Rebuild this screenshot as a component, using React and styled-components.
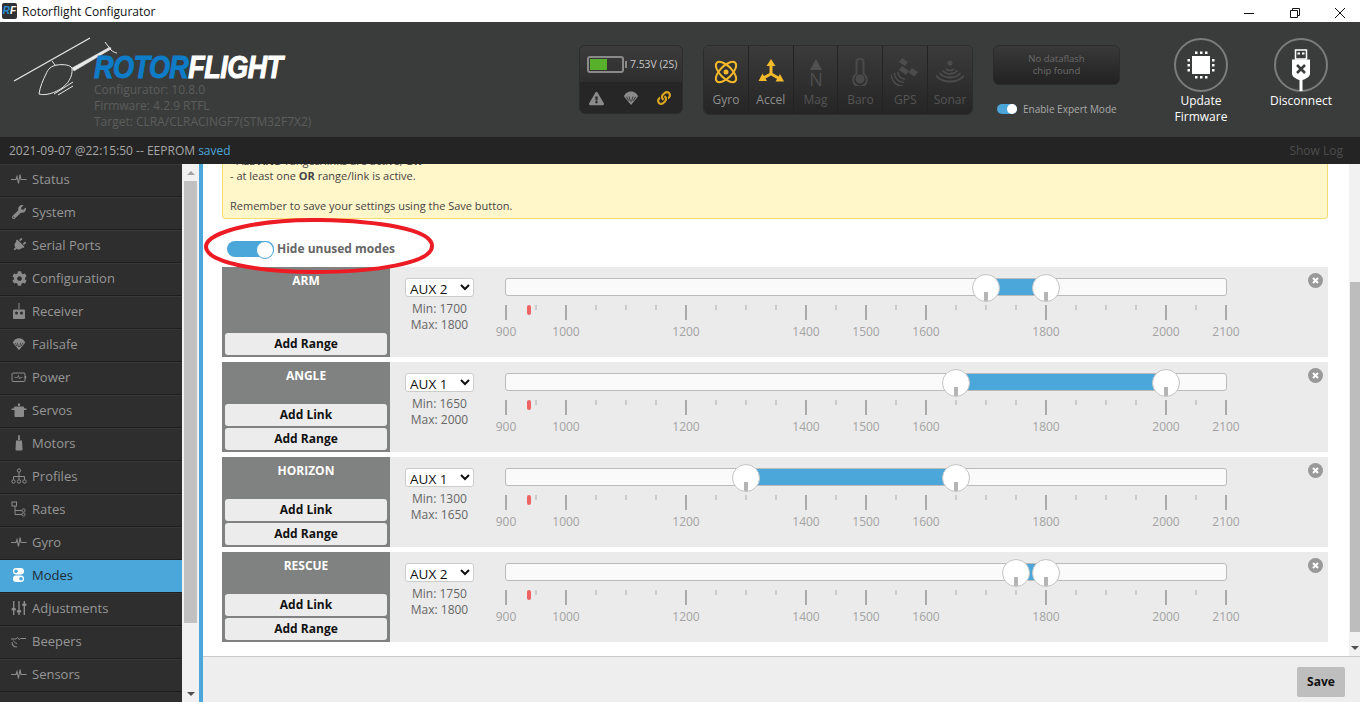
import React from "react";
import styled, { createGlobalStyle } from "styled-components";
import { FaWrench, FaPlug, FaCog, FaExclamationTriangle, FaLink } from "react-icons/fa";

const GlobalStyle = createGlobalStyle`
    html, body { margin: 0; padding: 0; height: 100%; overflow: hidden; background: #fff; }
    body { font-family: "Open Sans", "Liberation Sans", sans-serif; }
    * { box-sizing: border-box; }
`;

const Page = styled.div`
    width: 1360px;
    height: 702px;
    display: flex;
    flex-direction: column;
    position: relative;
    overflow: hidden;
`;

/* window title bar */
const TitleBar = styled.div`
    height: 22px;
    flex: none;
    display: flex;
    align-items: center;
    background: #fff;
    padding-left: 2px;
`;
const AppIcon = styled.div`
    width: 15px;
    height: 16px;
    margin-right: 5px;
    background: #2f3133;
    border-radius: 2px;
    font: italic 700 10px/16px "Liberation Sans", sans-serif;
    text-align: center;
    color: #fff;
    span { color: #2b8fd6; }
`;
const AppTitle = styled.div`
    font-size: 12px;
    color: #111;
    flex: 1;
`;
const WinButton = styled.div`
    width: 45.5px;
    padding-top: 4px;
    display: flex;
    justify-content: center;
    align-items: center;
    svg { display: block; }
    &:last-child { margin-right: -3px; }
`;

/* header */
const Header = styled.div`
    height: 115px;
    flex: none;
    background: #3a3c3b;
    display: flex;
    align-items: flex-start;
`;
const Brand = styled.div`
    width: 579px;
    flex: none;
    height: 100%;
    position: relative;
    padding: 31px 0 0 94px;
`;
const HeliArt = styled.svg`
    position: absolute;
    left: 0;
    top: 0;
`;
const Wordmark = styled.div`
    font: italic 700 31px/30px "Liberation Sans", sans-serif;
    height: 29px;
    letter-spacing: -0.6px;
    -webkit-text-stroke: 1px currentColor;
    color: #fff;
    white-space: nowrap;
    transform: scaleX(0.87);
    transform-origin: left center;
    span { color: #0e7cc8; }
`;
const BuildInfo = styled.div`
    font-size: 12px;
    line-height: 16px;
    color: #5c5d5c;
`;
const Panel = styled.div`
    margin-top: 23px;
    border: 1px solid #2c2c2c;
    border-radius: 6px;
    overflow: hidden;
    flex: none;
`;
const BatteryPanel = styled(Panel)`
    width: 104px;
    height: 69px;
    margin-right: 20px;
    background: #262626;
`;
const BatteryRow = styled.div`
    height: 36px;
    background: linear-gradient(#3c3c3c, #2e2e2e);
    display: flex;
    align-items: center;
    padding-left: 7px;
    gap: 5px;
    font-size: 10.4px;
    color: #c8c8c8;
    white-space: nowrap;
`;
const BatteryShell = styled.div`
    width: 37px;
    height: 17px;
    border: 2px solid #8a8a8a;
    border-radius: 3px;
    padding: 1px;
    position: relative;
    &::after {
        content: "";
        position: absolute;
        right: -5px;
        top: 3px;
        width: 2px;
        height: 7px;
        background: #8a8a8a;
    }
`;
const BatteryFill = styled.div`
    width: 55%;
    height: 100%;
    background: #59b02d;
`;
const VoltageText = styled.span`
    margin-left: 1px;
`;
const StatusIcons = styled.div`
    height: 32px;
    display: flex;
    align-items: center;
    justify-content: space-between;
    padding: 0 11px 0 9px;
    color: #8a8a8a;
`;
const SensorPanel = styled(Panel)`
    width: 270px;
    height: 70px;
    display: flex;
    margin-right: 20px;
`;
const Sensor = styled.div`
    flex: 1;
    height: 100%;
    background: linear-gradient(#3b3b3b, #252525);
    border-right: 1px solid #232323;
    display: flex;
    flex-direction: column;
    align-items: center;
    font-size: 12px;
    padding-top: 12px;
    color: ${p => (p.$on ? "#8f8f8f" : "#555")};
    &:last-child { border-right: 0; }
    svg { display: block; }
    span { margin-top: 6px; line-height: 16px; }
`;
const ExpertColumn = styled.div`
    width: 127px;
    flex: none;
    margin-top: 23px;
`;
const FlashBox = styled.div`
    height: 40px;
    border: 1px solid #2c2c2c;
    border-radius: 6px;
    background: linear-gradient(#393939, #222);
    color: #6b6b6b;
    font-size: 9.5px;
    line-height: 12px;
    display: flex;
    align-items: center;
    justify-content: center;
    text-align: center;
`;
const ExpertRow = styled.div`
    display: flex;
    align-items: center;
    margin: 17px 0 0 4px;
    gap: 6px;
    font-size: 10px;
    color: #a9a9a9;
    white-space: nowrap;
`;
const MiniToggle = styled.div`
    width: 20px;
    height: 10px;
    border-radius: 5px;
    background: #4ba7da;
    display: flex;
    justify-content: flex-end;
    align-items: center;
    &::after {
        content: "";
        width: 10px;
        height: 10px;
        border-radius: 50%;
        background: #fff;
    }
`;
const RoundAction = styled.div`
    width: ${p => p.$w}px;
    flex: none;
    margin-top: 16px;
    display: flex;
    flex-direction: column;
    align-items: center;
    color: #fff;
    font-size: 12px;
    line-height: 16px;
    text-align: center;
    svg { display: block; margin-bottom: 1px; }
`;

/* log bar */
const LogBar = styled.div`
    height: 27px;
    flex: none;
    background: #242424;
    display: flex;
    align-items: center;
    justify-content: space-between;
    padding: 0 17px 0 9px;
    font-size: 12px;
    color: #a6a6a6;
    b { font-weight: 400; color: #4ba7da; }
    i { font-style: normal; color: #4d4d4d; }
`;

/* body */
const Body = styled.div`
    flex: 1;
    min-height: 0;
    display: flex;
`;
const Sidebar = styled.div`
    width: 182px;
    flex: none;
    background: #2e2e2e;
    overflow: hidden;
`;
const NavItem = styled.div`
    height: 33px;
    display: flex;
    align-items: center;
    padding: 0 0 3px 11px;
    gap: 5px;
    font-size: 13px;
    color: ${p => (p.$active ? "#1c2a33" : "#979797")};
    background: ${p => (p.$active ? "#4ba7da" : "transparent")};
    border-bottom: 1px solid #1e1e1e;
    border-top: 1px solid ${p => (p.$active ? "#4ba7da" : "#383838")};
    svg { flex: none; display: block; }
`;
const NavIcon = styled.div`
    width: 16px;
    height: 16px;
    flex: none;
    display: flex;
    align-items: center;
    justify-content: center;
    color: ${p => (p.$active ? "#fff" : "#8b8b8b")};
`;
const TiltedPlug = styled(FaPlug)`
    transform: rotate(45deg);
`;
const ScrollTrack = styled.div`
    width: ${p => p.$w}px;
    flex: none;
    background: #f1f1f1;
    display: flex;
    flex-direction: column;
    align-items: ${p => (p.$end ? "flex-end" : "center")};
`;
const ScrollArrow = styled.div`
    height: 17px;
    flex: none;
    display: flex;
    align-items: center;
    justify-content: center;
    align-self: stretch;
    &::after {
        content: "";
        border-left: 4px solid transparent;
        border-right: 4px solid transparent;
        ${p => (p.$down ? "border-top: 4px solid #505050;" : "border-bottom: 4px solid #a3a3a3;")}
    }
`;
const ScrollThumb = styled.div`
    width: ${p => p.$w}px;
    height: ${p => p.$h}px;
    margin-top: ${p => p.$top}px;
    background: ${p => p.$c};
    flex: none;
`;
const Spacer = styled.div`
    flex: 1;
`;
const Stage = styled.div`
    flex: 1;
    min-width: 0;
    display: flex;
    flex-direction: column;
    border-left: 4px solid #4ba7da;
`;
const ScrollArea = styled.div`
    flex: 1;
    min-height: 0;
    display: flex;
    background: #fff;
`;
const Content = styled.div`
    flex: 1;
    min-width: 0;
    overflow: hidden;
    padding: 0 21px 0 19px;
`;
const Notice = styled.div`
    margin-top: -12px;
    background: #fff6c9;
    border: 1px solid #f2dd72;
    border-radius: 0 0 3px 3px;
    padding: 0 7px 5px;
    font-size: 11px;
    line-height: 15px;
    color: #444;
    b { font-weight: 700; }
`;
const HideRow = styled.div`
    height: 48px;
    padding: 12px 0 0 5px;
    display: flex;
    align-items: center;
    gap: 3px;
    font-size: 12px;
    font-weight: 700;
    color: #666;
    span { margin-top: -2px; }
`;
const BigToggle = styled.div`
    width: 47px;
    height: 16px;
    border-radius: 8px;
    background: #4ba7da;
    display: flex;
    justify-content: flex-end;
    &::after {
        content: "";
        width: 16px;
        height: 16px;
        border-radius: 50%;
        background: #fff;
        border: 1px solid #4ba7da;
    }
`;
const ModeList = styled.div`
    display: flex;
    flex-direction: column;
    gap: 5px;
`;
const ModeRow = styled.div`
    height: 90px;
    background: #ebebeb;
    display: flex;
    position: relative;
`;
const ModeHead = styled.div`
    width: 168px;
    flex: none;
    background: #7f8280;
    display: flex;
    flex-direction: column;
    padding: 0 3px 2px;
    gap: 2px;
`;
const ModeName = styled.div`
    flex: 1;
    text-align: center;
    color: #fff;
    font-size: 12px;
    font-weight: 700;
    line-height: 16px;
    padding-top: 6px;
`;
const HeadButton = styled.div`
    height: 22px;
    background: #ececec;
    border-radius: 3px;
    color: #111;
    font-size: 12px;
    font-weight: 700;
    line-height: 22px;
    text-align: center;
`;
const RangeColumn = styled.div`
    width: 115px;
    flex: none;
    padding: 11px 0 0 15px;
`;
const AuxSelect = styled.select`
    width: 69px;
    height: 19px;
    border: 1px solid #ccc;
    border-radius: 3px;
    background: #fff;
    font-family: "Open Sans", sans-serif;
    font-size: 13.5px;
    color: #111;
    padding: 0;
    display: block;
`;
const MinMax = styled.div`
    width: 69px;
    margin-top: 4px;
    text-align: center;
    font-size: 12px;
    line-height: 16px;
    color: #666;
`;
const SliderColumn = styled.div`
    width: 722px;
    flex: none;
    padding-top: 11px;
`;
const Track = styled.div`
    height: 18px;
    border: 1px solid #bbb;
    border-radius: 3px;
    background: #fafafa;
    position: relative;
`;
const TrackFill = styled.div`
    position: absolute;
    top: 0;
    bottom: 0;
    background: #4ba7da;
`;
const Handle = styled.div`
    position: absolute;
    top: -5px;
    width: 28px;
    height: 28px;
    margin-left: -14px;
    border: 1px solid #c4c4c4;
    border-radius: 50%;
    background: #fff;
    overflow: hidden;
    &::after {
        content: "";
        position: absolute;
        left: 11px;
        bottom: 0;
        width: 4px;
        height: 9px;
        background: #b5b5b5;
    }
`;
const Pips = styled.div`
    margin: 9px 1px 0;
    display: flex;
    justify-content: space-between;
    position: relative;
`;
const Pip = styled.div`
    width: 0;
    display: flex;
    flex-direction: column;
    align-items: center;
    &::before {
        content: "";
        flex: none;
        width: 2px;
        height: ${p => (p.$major ? 15 : 5)}px;
        background: ${p => (p.$major ? "#aaa" : "#ccc")};
    }
    span {
        margin-top: ${p => (p.$major ? 4 : 14)}px;
        font-size: 12px;
        line-height: 16px;
        color: #a3a3a3;
    }
`;
const ChannelMark = styled.div`
    position: absolute;
    top: 0;
    width: 4px;
    height: 10px;
    margin-left: -2px;
    border-radius: 2px;
    background: #ee6464;
`;
const RemoveButton = styled.div`
    position: absolute;
    top: 6px;
    right: 5px;
    width: 15px;
    height: 15px;
    svg { display: block; }
`;
const RingMark = styled.svg`
    position: absolute;
    left: 202px;
    top: 215px;
    pointer-events: none;
`;
const Footer = styled.div`
    height: 46px;
    flex: none;
    background: #eee;
    border-top: 1px solid #c9c9c9;
    display: flex;
    justify-content: flex-end;
    align-items: flex-start;
    padding: 10px 15px 0 0;
`;
const SaveButton = styled.div`
    width: 48px;
    height: 30px;
    background: #bebebe;
    border-radius: 2px;
    color: #111;
    font-size: 12px;
    font-weight: 700;
    line-height: 30px;
    text-align: center;
`;

/* drawings */
const Pulse = () => (
    <svg width="16" height="16" viewBox="0 0 16 16" fill="none" stroke="currentColor" strokeWidth="1.1">
        <path d="M0 8.5h5l1-3 1.5 7 1.5-9 1 5h5.5" />
    </svg>
);
const Parachute = ({ size = 16, hole = "#2e2e2e" }) => (
    <svg width={size} height={size} viewBox="0 0 16 16" fill="currentColor">
        <path d="M1 6.5C2 3 5 1.5 8 1.5s6 1.5 7 5L8 15z" />
        <path d="M3.4 6.7l2.3 4M12.6 6.7l-2.3 4M6 6.5l1.5 5M10 6.5l-1.5 5" stroke={hole} strokeWidth=".8" />
    </svg>
);
const Receiver = () => (
    <svg width="16" height="16" viewBox="0 0 16 16" fill="currentColor">
        <path d="M7.5 0h1v6h-1z" />
        <path d="M3 6.5h10a1 1 0 0 1 1 1V15a1 1 0 0 1-1 1H3a1 1 0 0 1-1-1V7.500a1 1 0 0 1 1-1z" />
        <circle cx="5.500" cy="10" r="1.500" fill="#2e2e2e" />
        <circle cx="10.500" cy="10" r="1.500" fill="#2e2e2e" />
    </svg>
);
const PowerIcon = () => (
    <svg width="16" height="16" viewBox="0 0 16 16" fill="none" stroke="currentColor">
        <rect x="1" y="4" width="13" height="8.500" rx="1" />
        <path d="M14.500 7v2.500" strokeWidth="1.500" />
        <path d="M3.500 8.500h3l1-2 1 3.500 1-1.500h2" strokeWidth=".8" />
    </svg>
);
const Pot = () => (
    <svg width="16" height="16" viewBox="0 0 16 16" fill="currentColor">
        <path d="M7 1.500h2V4H7z" />
        <path d="M3.500 4.500h9l1 2h2V8h-2.500v6a1 1 0 0 1-1 1H4.500a1 1 0 0 1-1-1V8H.500V6.500h2z" />
    </svg>
);
const Motor = () => (
    <svg width="16" height="16" viewBox="0 0 16 16" fill="currentColor">
        <path d="M7.300 0h1.400l.3 5h-2z" />
        <path d="M5 5.500h6l.500 9a1 1 0 0 1-1 1h-5a1 1 0 0 1-1-1z" />
    </svg>
);
const Sitemap = () => (
    <svg width="16" height="16" viewBox="0 0 16 16" fill="none" stroke="currentColor" strokeWidth="1">
        <circle cx="8" cy="2.500" r="1.700" />
        <circle cx="2.500" cy="13.500" r="1.700" />
        <circle cx="8" cy="13.500" r="1.700" />
        <circle cx="13.500" cy="13.500" r="1.700" />
        <path d="M8 4.200v7.600M2.500 11.800V8.500h11v3.300" />
    </svg>
);
const RatesIcon = () => (
    <svg width="16" height="16" viewBox="0 0 16 16" fill="none" stroke="currentColor" strokeWidth="1">
        <rect x="1" y="1" width="4.500" height="4" />
        <path d="M4 5v8.500h7M4 9.500h7" />
        <circle cx="12.500" cy="9.500" r="1.600" />
        <circle cx="12.500" cy="13.500" r="1.600" />
    </svg>
);
const ModesIcon = () => (
    <svg width="16" height="16" viewBox="0 0 16 16" fill="currentColor">
        <rect x="2" y="1" width="11" height="6.500" rx="3.200" />
        <rect x="2" y="8.500" width="11" height="6.500" rx="3.200" />
        <circle cx="5" cy="4.200" r="1.800" fill="#4ba7da" />
        <circle cx="10" cy="11.800" r="1.800" fill="#4ba7da" />
    </svg>
);
const AdjustIcon = () => (
    <svg width="16" height="16" viewBox="0 0 16 16" fill="currentColor">
        <path d="M2 1h1.400v14H2zM7.300 1h1.400v14H7.300zM12.600 1H14v14h-1.400z" />
        <rect x=".5" y="8" width="4.400" height="2.600" rx="1" />
        <rect x="5.800" y="10" width="4.400" height="2.600" rx="1" />
        <rect x="11.100" y="3.500" width="4.400" height="2.600" rx="1" />
    </svg>
);
const BeeperIcon = () => (
    <svg width="16" height="16" viewBox="0 0 16 16" fill="none" stroke="currentColor" strokeWidth="1">
        <path d="M0 6h5l1.500-1.500L8 6.500 9.500 5.500H15" />
        <path d="M1 9c0 3 2 5 5 5M1 11c.5 1.500 1.500 2.500 3 3M2.500 7.500C3 9 4 10 6 10.500" />
    </svg>
);

const Gyro = () => (
    <svg width="28" height="28" viewBox="0 0 28 28" fill="none" stroke="#f2b92b" strokeWidth="2">
        <ellipse cx="14" cy="14" rx="13" ry="6" transform="rotate(45 14 14)" />
        <ellipse cx="14" cy="14" rx="13" ry="6" transform="rotate(-45 14 14)" />
        <circle cx="14" cy="14" r="2.500" fill="#f2b92b" stroke="none" />
    </svg>
);
const Accel = () => (
    <svg width="28" height="28" viewBox="0 0 28 28" fill="#f2b92b">
        <path d="M14 1l4.500 7H15.500v7l6 3.500 1.500-2.500 4 7.500h-8.500l1.500-2.500L14 17.500 8.500 20.500 10 23H1.500l4-7.500L7 18l5.500-3V8H9.500z" />
    </svg>
);
const Mag = () => (
    <svg width="28" height="28" viewBox="0 0 28 28">
        <path d="M8 12L14 1l6 11z" fill="#4f4f4f" />
        <text x="14" y="28" textAnchor="middle" fontFamily="Open Sans, sans-serif" fontSize="18" fill="#4f4f4f">N</text>
    </svg>
);
const Baro = () => (
    <svg width="28" height="28" viewBox="0 0 28 28" fill="none" stroke="#4a4a4a" strokeWidth="2">
        <path d="M10.500 16V4a3.500 3.500 0 0 1 7 0v12a6.800 6.800 0 1 1-7 0z" />
        <circle cx="14" cy="21" r="3.500" fill="#4a4a4a" />
    </svg>
);
const Gps = () => (
    <svg width="28" height="28" viewBox="0 0 28 28" fill="#4c4c4c">
        <path d="M11 0l6 4-3 4-6-4zM21 10l6 4-3.500 4.500-6-4z" />
        <path d="M11 8l7 5-3 4-7-5z" />
        <path d="M7 14c0 4 3 7 7 7M3.500 15c0 5.500 4 9.500 9.500 9.500M0 16c.5 7 5 12 12 12" fill="none" stroke="#4c4c4c" strokeWidth="1.500" />
    </svg>
);
const Sonar = () => (
    <svg width="28" height="28" viewBox="0 0 28 28" fill="none" stroke="#4c4c4c" strokeWidth="1.800">
        <circle cx="14" cy="5" r="2.500" fill="#4c4c4c" stroke="none" />
        <path d="M10 11c2.500 2 5.500 2 8 0M6.500 12.500c4 4.500 11 4.500 15 0M3.500 15c5 6 16 6 21 0M0 17.500c6 8 22 8 28 0" />
    </svg>
);
const ChipCircle = () => (
    <svg width="54" height="54" viewBox="0 0 54 54">
        <circle cx="27" cy="27" r="26" fill="none" stroke="#7c7c7c" strokeWidth="2" />
        <rect x="18" y="18" width="18" height="18" fill="#fff" />
        <path d="M21 13.500h2.500v2.500H21zM26 13.500h2.500v2.500H26zM31 13.500h2.500v2.500H31zM21 38h2.500v2.500H21zM26 38h2.500v2.500H26zM31 38h2.500v2.500H31zM13.500 21H16v2.500h-2.500zM13.500 26H16v2.500h-2.500zM13.500 31H16v2.500h-2.500zM38 21h2.500v2.500H38zM38 26h2.500v2.500H38zM38 31h2.500v2.500H38z" fill="#fff" />
    </svg>
);
const UsbCircle = () => (
    <svg width="54" height="54" viewBox="0 0 54 54">
        <circle cx="27" cy="27" r="26" fill="none" stroke="#7c7c7c" strokeWidth="2" />
        <path d="M21.500 12h11v9h-11z" fill="none" stroke="#fff" strokeWidth="1.500" />
        <path d="M23.500 14.500h2.500v2h-2.500zM28 14.500h2.500v2H28z" fill="#fff" />
        <path d="M18 21.500h18v14c0 3-3 5-7.500 6.500v11h-3V42C21 40.500 18 38.500 18 35.500z" fill="#fff" />
        <path d="M23 27l8 8M31 27l-8 8" stroke="#3a3c3b" strokeWidth="2.500" />
    </svg>
);

const scaleLeft = v => ((v - 900) / 1200) * 100;
const MAJOR = [900, 1000, 1200, 1400, 1500, 1600, 1800, 2000, 2100];
const PIP_VALUES = Array.from({ length: 25 }, (_, i) => 900 + i * 50);

const NAV = [
    ["Status", <Pulse />],
    ["System", <FaWrench size={14} />],
    ["Serial Ports", <TiltedPlug size={14} />],
    ["Configuration", <FaCog size={15} />],
    ["Receiver", <Receiver />],
    ["Failsafe", <Parachute size={14} />],
    ["Power", <PowerIcon />],
    ["Servos", <Pot />],
    ["Motors", <Motor />],
    ["Profiles", <Sitemap />],
    ["Rates", <RatesIcon />],
    ["Gyro", <Pulse />],
    ["Modes", <ModesIcon />],
    ["Adjustments", <AdjustIcon />],
    ["Beepers", <BeeperIcon />],
    ["Sensors", <Pulse />],
];

const MODES = [
    { name: "ARM", aux: "AUX 2", min: 1700, max: 1800, link: false },
    { name: "ANGLE", aux: "AUX 1", min: 1650, max: 2000, link: true },
    { name: "HORIZON", aux: "AUX 1", min: 1300, max: 1650, link: true },
    { name: "RESCUE", aux: "AUX 2", min: 1750, max: 1800, link: true },
];

function ModeEntry({ mode }) {
    return (
        <ModeRow>
            <ModeHead>
                <ModeName>{mode.name}</ModeName>
                {mode.link && <HeadButton>Add Link</HeadButton>}
                <HeadButton>Add Range</HeadButton>
            </ModeHead>
            <RangeColumn>
                <AuxSelect defaultValue={mode.aux}>
                    <option>AUX 1</option>
                    <option>AUX 2</option>
                </AuxSelect>
                <MinMax>
                    Min: {mode.min}
                    <br />
                    Max: {mode.max}
                </MinMax>
            </RangeColumn>
            <SliderColumn>
                <Track>
                    <TrackFill style={{ left: `${scaleLeft(mode.min)}%`, right: `${100 - scaleLeft(mode.max)}%` }} />
                    <Handle style={{ left: `${scaleLeft(mode.min)}%` }} />
                    <Handle style={{ left: `${scaleLeft(mode.max)}%` }} />
                </Track>
                <Pips>
                    <ChannelMark style={{ left: `${scaleLeft(938)}%` }} />
                    {PIP_VALUES.map(v => (
                        <Pip key={v} $major={MAJOR.includes(v)}>
                            {MAJOR.includes(v) && <span>{v}</span>}
                        </Pip>
                    ))}
                </Pips>
            </SliderColumn>
            <RemoveButton>
                <svg width="15" height="15" viewBox="0 0 15 15">
                    <circle cx="7.500" cy="7.500" r="7.500" fill="#999" />
                    <path d="M5 5l5 5M10 5l-5 5" stroke="#fff" strokeWidth="2" />
                </svg>
            </RemoveButton>
        </ModeRow>
    );
}

export default function App() {
    return (
        <Page>
            <GlobalStyle />
            <TitleBar>
                <AppIcon>
                    <span>R</span>F
                </AppIcon>
                <AppTitle>Rotorflight Configurator</AppTitle>
                <WinButton>
                    <svg width="10" height="10" viewBox="0 0 10 10" stroke="#111" fill="none"><path d="M0 5.500h10" /></svg>
                </WinButton>
                <WinButton>
                    <svg width="10" height="10" viewBox="0 0 10 10" stroke="#111" fill="none"><path d="M.5 2.500h7v7h-7zM2.500 2.500v-2h7v7h-2" /></svg>
                </WinButton>
                <WinButton>
                    <svg width="10" height="10" viewBox="0 0 10 10" stroke="#111" fill="none"><path d="M0 0l10 10M10 0L0 10" /></svg>
                </WinButton>
            </TitleBar>
            <Header>
                <Brand>
                    <HeliArt width="130" height="80" viewBox="0 0 130 80" fill="none" stroke="#e8e8e8">
                        <path d="M14 59L90 16" strokeWidth="1.300" />
                        <path d="M72 46L110 25l1 2L74 49z" fill="#e8e8e8" strokeWidth=".5" />
                        <path d="M105 20l6 8c2 2 5 3 6 3" strokeWidth="1" />
                        <path d="M52 39l3 4" strokeWidth="1" />
                        <path d="M72 46c-2-3-8-4-15-3-6 1-9 4-11 9-3 6-6 13-7 20 6 2 16-1 23-6 5-4 11-10 10-20z" strokeWidth="1" />
                        <path d="M54 72l19-12M58 73l15-9" strokeWidth="1" />
                    </HeliArt>
                    <Wordmark>
                        <span>ROTOR</span>FLIGHT
                    </Wordmark>
                    <BuildInfo>
                        Configurator: 10.8.0
                        <br />
                        Firmware: 4.2.9 RTFL
                        <br />
                        Target: CLRA/CLRACINGF7(STM32F7X2)
                    </BuildInfo>
                </Brand>
                <BatteryPanel>
                    <BatteryRow>
                        <BatteryShell>
                            <BatteryFill />
                        </BatteryShell>
                        <VoltageText>7.53V (2S)</VoltageText>
                    </BatteryRow>
                    <StatusIcons>
                        <FaExclamationTriangle size={15} />
                        <Parachute size={16} hole="#262626" />
                        <FaLink size={14} color="#d9a520" />
                    </StatusIcons>
                </BatteryPanel>
                <SensorPanel>
                    <Sensor $on><Gyro /><span>Gyro</span></Sensor>
                    <Sensor $on><Accel /><span>Accel</span></Sensor>
                    <Sensor><Mag /><span>Mag</span></Sensor>
                    <Sensor><Baro /><span>Baro</span></Sensor>
                    <Sensor><Gps /><span>GPS</span></Sensor>
                    <Sensor><Sonar /><span>Sonar</span></Sensor>
                </SensorPanel>
                <ExpertColumn>
                    <FlashBox>
                        No dataflash
                        <br />
                        chip found
                    </FlashBox>
                    <ExpertRow>
                        <MiniToggle />
                        Enable Expert Mode
                    </ExpertRow>
                </ExpertColumn>
                <RoundAction $w={162}>
                    <ChipCircle />
                    Update
                    <br />
                    Firmware
                </RoundAction>
                <RoundAction $w={38}>
                    <UsbCircle />
                    Disconnect
                </RoundAction>
            </Header>
            <LogBar>
                <span>
                    2021-09-07 @22:15:50 -- EEPROM <b>saved</b>
                </span>
                <i>Show Log</i>
            </LogBar>
            <Body>
                <Sidebar>
                    {NAV.map(([label, icon]) => (
                        <NavItem key={label} $active={label === "Modes"}>
                            <NavIcon $active={label === "Modes"}>{icon}</NavIcon>
                            {label}
                        </NavItem>
                    ))}
                </Sidebar>
                <ScrollTrack $w={17}>
                    <ScrollArrow />
                    <ScrollThumb $w={13} $h={442} $top={0} $c="#c1c1c1" />
                    <Spacer />
                    <ScrollArrow $down />
                </ScrollTrack>
                <Stage>
                    <ScrollArea>
                        <Content>
                            <Notice>
                                - ALL <b>AND</b> ranges/links are active, <b>OR</b>
                                <br />
                                - at least one <b>OR</b> range/link is active.
                                <br />
                                <br />
                                Remember to save your settings using the Save button.
                            </Notice>
                            <HideRow>
                                <BigToggle />
                                <span>Hide unused modes</span>
                            </HideRow>
                            <ModeList>
                                {MODES.map(m => (
                                    <ModeEntry key={m.name} mode={m} />
                                ))}
                            </ModeList>
                        </Content>
                        <ScrollTrack $w={11} $end>
                            <ScrollThumb $w={10} $h={350} $top={118} $c="#bdbdbd" />
                            <Spacer />
                            <ScrollArrow $down />
                        </ScrollTrack>
                    </ScrollArea>
                    <Footer>
                        <SaveButton>Save</SaveButton>
                    </Footer>
                </Stage>
            </Body>
            <RingMark width="236" height="62" viewBox="0 0 236 62" fill="none" stroke="#ed1c24" strokeWidth="4">
                <path d="M4 31C6 16 60 4 118 5c58 1 112 9 112 26 0 17-56 26-118 26C54 57 3 47 4 31z" />
            </RingMark>
        </Page>
    );
}
